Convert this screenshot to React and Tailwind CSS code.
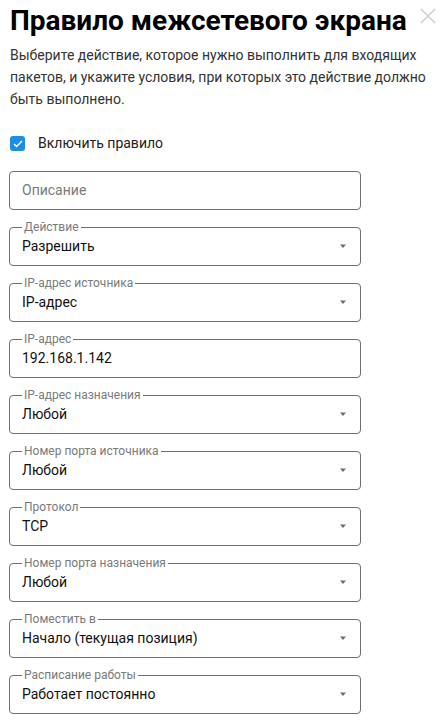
import React from "react";

const fields = [
	{ label: "Действие", value: "Разрешить", select: true },
	{ label: "IP-адрес источника", value: "IP-адрес", select: true },
	{ label: "IP-адрес", value: "192.168.1.142", select: false },
	{ label: "IP-адрес назначения", value: "Любой", select: true },
	{ label: "Номер порта источника", value: "Любой", select: true },
	{ label: "Протокол", value: "TCP", select: true },
	{ label: "Номер порта назначения", value: "Любой", select: true },
	{ label: "Поместить в", value: "Начало (текущая позиция)", select: true },
	{ label: "Расписание работы", value: "Работает постоянно", select: true },
];

// Поле с плавающей подписью на рамке
const Field = ({ label, value, select }) => (
	<div className="relative h-[39px] w-[352px] border border-[#6f6f6f] rounded-[4px] flex items-center pl-[12px] pr-[12px]">
		<span className="absolute -top-[8px] left-[12px] bg-white px-[2px] text-[12px] leading-[14px] text-[#7a7a7a]">
			{label}
		</span>
		<span className="flex-1 text-[14px] text-[#111]">{value}</span>
		{select && (
			<svg width="8" height="5" viewBox="0 0 8 5" className="mr-[1px]">
				<path d="M1 0.5h6L4 4z" fill="#6b6b6b" />
			</svg>
		)}
	</div>
);

export default function App() {
	return (
		<div
			className="relative bg-white min-h-screen pl-[9px] pt-[3px]"
			style={{ fontFamily: "Roboto, 'Noto Sans', sans-serif" }}
		>
			<button className="absolute right-[10px] top-[8px] w-[16px] h-[16px]">
				<svg width="16" height="16" viewBox="0 0 16 16">
					<path d="M1 1L15 15M15 1L1 15" stroke="#d0d0d0" strokeWidth="1.6" />
				</svg>
			</button>
			<h1 className="text-[28px] leading-[36px] font-bold text-black ml-[1px]">
				Правило межсетевого экрана
			</h1>
			<p className="mt-[5px] text-[14px] leading-[22px] text-[#333] pr-[20px] ml-[1px]">
				Выберите действие, которое нужно выполнить для входящих пакетов, и
				укажите условия, при которых это действие должно быть выполнено.
			</p>
			<label className="mt-[23px] flex items-center gap-[13px]">
				<span className="w-[15px] h-[15px] ml-[1px] rounded-[3px] bg-[#1a8fe3] flex items-center justify-center">
					<svg width="10" height="8" viewBox="0 0 10 8">
						<path d="M1 4l2.6 2.6L9 1" stroke="#fff" strokeWidth="1.4" fill="none" />
					</svg>
				</span>
				<span className="text-[14px] text-[#222]">Включить правило</span>
			</label>
			<div className="mt-[17px] flex flex-col gap-[17px]">
				<div className="h-[39px] w-[352px] border border-[#6f6f6f] rounded-[4px] flex items-center px-[12px]">
					<span className="text-[14px] text-[#7a7a7a]">Описание</span>
				</div>
				{fields.map((f) => (
					<Field key={f.label} {...f} />
				))}
			</div>
		</div>
	);
}
